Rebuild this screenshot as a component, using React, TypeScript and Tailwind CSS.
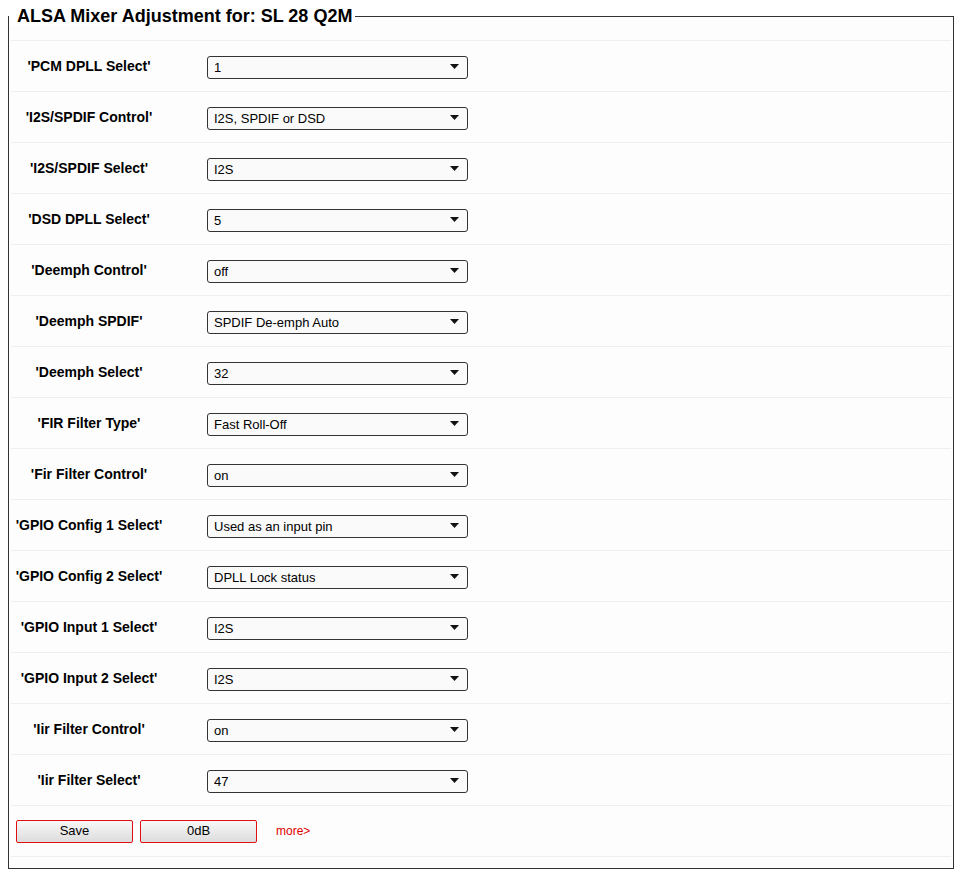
import { useState } from 'react';

const controls: { label: string; value: string; options: string[] }[] = [
  { label: "'PCM DPLL Select'", value: '1', options: ['0', '1', '2', '3', '4', '5', '6', '7'] },
  { label: "'I2S/SPDIF Control'", value: 'I2S, SPDIF or DSD', options: ['I2S, SPDIF or DSD', 'I2S only', 'SPDIF only'] },
  { label: "'I2S/SPDIF Select'", value: 'I2S', options: ['I2S', 'SPDIF'] },
  { label: "'DSD DPLL Select'", value: '5', options: ['0', '1', '2', '3', '4', '5', '6', '7'] },
  { label: "'Deemph Control'", value: 'off', options: ['off', 'on'] },
  { label: "'Deemph SPDIF'", value: 'SPDIF De-emph Auto', options: ['SPDIF De-emph Auto', 'SPDIF De-emph Manual'] },
  { label: "'Deemph Select'", value: '32', options: ['32', '44.1', '48'] },
  { label: "'FIR Filter Type'", value: 'Fast Roll-Off', options: ['Fast Roll-Off', 'Slow Roll-Off', 'Minimum Phase'] },
  { label: "'Fir Filter Control'", value: 'on', options: ['off', 'on'] },
  { label: "'GPIO Config 1 Select'", value: 'Used as an input pin', options: ['Used as an input pin', 'DPLL Lock status'] },
  { label: "'GPIO Config 2 Select'", value: 'DPLL Lock status', options: ['Used as an input pin', 'DPLL Lock status'] },
  { label: "'GPIO Input 1 Select'", value: 'I2S', options: ['I2S', 'SPDIF'] },
  { label: "'GPIO Input 2 Select'", value: 'I2S', options: ['I2S', 'SPDIF'] },
  { label: "'Iir Filter Control'", value: 'on', options: ['off', 'on'] },
  { label: "'Iir Filter Select'", value: '47', options: ['47', '50', '60', '70'] },
];

function MixerRow({ label, value, options }: { label: string; value: string; options: string[] }) {
  const [v, setV] = useState(value);
  return (
    <div className="flex items-center h-[51px] border-b border-[#efefef]">
      <div className="w-[156px] text-center text-[14px] font-bold text-black">{label}</div>
      <div className="relative ml-[40px] w-[261px] h-[23px]">
        <select
          value={v}
          onChange={(e) => setV(e.target.value)}
          className="appearance-none w-full h-full pl-[6px] pr-6 bg-[#fafafa] border border-[#333] rounded-[3px] text-[13px] text-black outline-none"
        >
          {options.map((o) => (
            <option key={o} value={o}>
              {o}
            </option>
          ))}
        </select>
        {/* arrow */}
        <svg className="absolute right-[9px] top-[9px] pointer-events-none" width="9" height="5" viewBox="0 0 9 5">
          <path d="M0 0h9L4.5 5z" fill="#111" />
        </svg>
      </div>
    </div>
  );
}

export default function App() {
  return (
    <div className="pt-[6px] pl-[8px] bg-white min-h-screen" style={{ fontFamily: '"Liberation Sans", Arial, sans-serif' }}>
      <fieldset className="w-[946px] border border-[#333] pb-[11px] bg-[#fdfdfd]">
        <legend className="ml-0 pl-[8px] pr-[3px] text-[18px] leading-[20px] font-bold text-black bg-white">
          ALSA Mixer Adjustment for: SL 28 Q2M
        </legend>

        <div className="mx-[2px] mt-[14px] border-t border-[#efefef]">
          {controls.map((c) => (
            <MixerRow key={c.label} {...c} />
          ))}

          {/* buttons */}
          <div className="flex items-center h-[51px] border-b border-[#efefef] pl-[5px]">
            <button className="w-[117px] h-[23px] border border-[#e01010] rounded-[2px] bg-gradient-to-b from-[#f8f8f8] to-[#dcdcdc] text-[13px] text-black">
              Save
            </button>
            <button className="ml-[7px] w-[117px] h-[23px] border border-[#e01010] rounded-[2px] bg-gradient-to-b from-[#f8f8f8] to-[#dcdcdc] text-[13px] text-black">
              0dB
            </button>
            <a href="#" className="ml-[19px] text-[12px] text-[#e00000]">
              more&gt;
            </a>
          </div>
        </div>
      </fieldset>
    </div>
  );
}
